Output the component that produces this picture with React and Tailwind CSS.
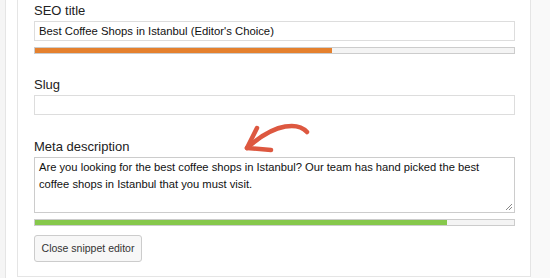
export default function App() {
  return (
    <div className="w-[550px] h-[278px] overflow-hidden bg-[#f9f9f9] font-['Liberation_Sans',Arial,sans-serif] text-[#222]">
      <div className="flex h-full">
        <div className="w-[6px] shrink-0 bg-[#f5f5f5] border-r border-[#e5e5e5]" />
        <div className="w-[525px] shrink-0 bg-white pl-[11px] pr-0">
          <div className="relative h-[277px] border-l border-r border-b border-[#e5e5e5] bg-white pl-[16px] pr-[15px]">
            <label className="block pt-[2px] text-[13px] leading-[18px]">SEO title</label>
            <div className="mt-[1px] h-[20px] border border-[#ddd] px-[4px] text-[11.3px] leading-[18px] text-[#111]">
              Best Coffee Shops in Istanbul (Editor's Choice)
            </div>
            <div className="mt-[6px] h-[7px] border border-[#ccc] bg-[#f4f4f4]">
              <div className="h-full w-[62%] bg-[#e5812e]" />
            </div>

            <label className="mt-[22px] block text-[13px] leading-[18px]">Slug</label>
            <div className="mt-[1px] h-[20px] border border-[#ddd]" />

            <label className="mt-[23px] block text-[13px] leading-[18px]">Meta description</label>
            <div className="relative mt-[1px] h-[56px] border border-[#ccc] px-[4px] pt-[1px] text-[11.2px] leading-[17px] text-[#111]">
              Are you looking for the best coffee shops in Istanbul? Our team has hand picked the best coffee shops in Istanbul that you must visit.
              <svg className="absolute right-[1px] bottom-[1px]" width="8" height="8" viewBox="0 0 8 8">
                <path d="M7 1 L1 7 M7 4 L4 7" stroke="#888" strokeWidth="1" />
              </svg>
            </div>
            <div className="mt-[6px] h-[7px] border border-[#ccc] bg-[#f4f4f4]">
              <div className="h-full w-[86%] bg-[#86c84b]" />
            </div>

            <button className="mt-[9px] h-[27px] w-[108px] rounded-[3px] border border-[#ccc] bg-[#f7f7f7] text-[10.5px] text-[#333]">
              Close snippet editor
            </button>

            <svg className="absolute left-[221px] top-[115px]" width="80" height="45" viewBox="0 0 80 45">
              <path d="M68 17 C60 8, 38 6, 8 33" fill="none" stroke="#dd5840" strokeWidth="4.5" strokeLinecap="round" />
              <path d="M18 13 L8 33 L32 35" fill="none" stroke="#dd5840" strokeWidth="4.5" strokeLinecap="round" strokeLinejoin="round" />
            </svg>
          </div>
        </div>
      </div>
    </div>
  )
}
